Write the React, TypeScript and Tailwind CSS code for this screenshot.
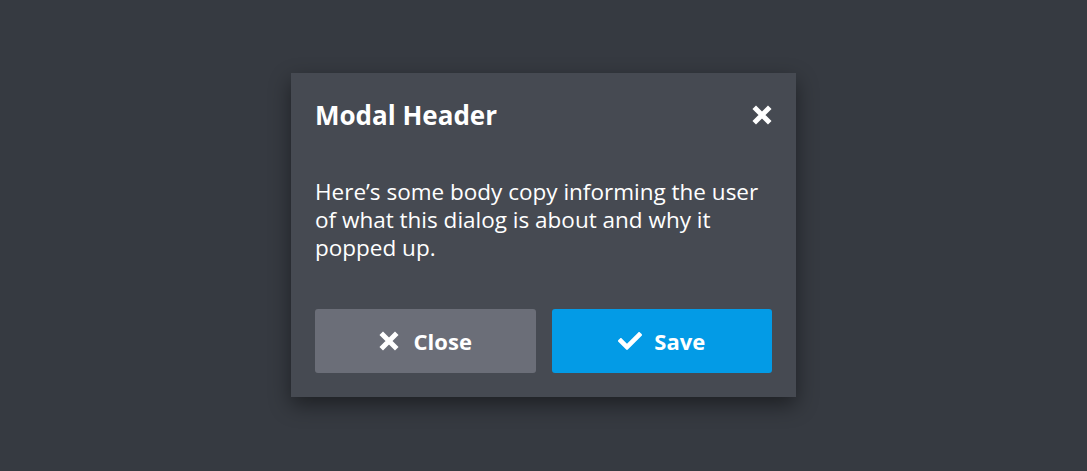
import { FaCheck } from "react-icons/fa";

const XMark = ({ className }: { className?: string }) => (
  <svg viewBox="0 0 20 20" className={className} fill="none" stroke="currentColor">
    <path d="M4 4 16 16M16 4 4 16" strokeWidth={5} strokeLinecap="square" />
  </svg>
);

const App = () => {
  return (
    <main
      className="flex h-[471px] w-full items-start justify-center bg-[#363a41] pt-[73px]"
      style={{ fontFamily: '"Open Sans", sans-serif' }}
    >
      <section className="w-[505px] bg-[#464a52] px-6 pb-6 pt-[22px] shadow-[0_8px_20px_rgba(0,0,0,0.45)]">
        <header className="flex items-center justify-between">
          <h1 className="text-[26px] font-bold leading-[40px] text-white">Modal Header</h1>
          <button type="button" className="text-white">
            <XMark className="size-5" />
          </button>
        </header>

        <p className="mt-[43px] text-[22.5px] leading-[28px] text-white">
          Here’s some body copy informing the user of what this dialog is about and why it
          popped up.
        </p>

        <div className="mt-[47px] grid grid-cols-2 gap-4">
          <button
            type="button"
            className="flex h-16 items-center justify-center gap-[15px] rounded-[3px] bg-[#6b6e78] text-[22px] font-bold text-white"
          >
            <XMark className="size-5" />
            Close
          </button>
          <button
            type="button"
            className="flex h-16 items-center justify-center gap-[12px] rounded-[3px] bg-[#039be6] text-[22px] font-bold text-white"
          >
            <FaCheck className="size-[24px]" />
            Save
          </button>
        </div>
      </section>
    </main>
  );
};

export default App;
